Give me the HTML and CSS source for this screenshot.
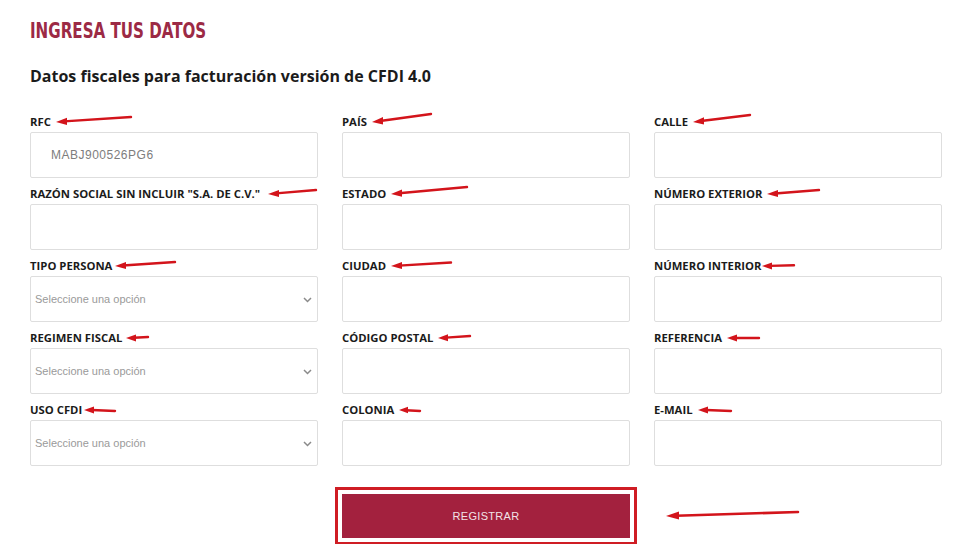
FILE: index.html
```html
<!DOCTYPE html>
<html lang="es">
<head>
<meta charset="utf-8">
<title>Ingresa tus datos</title>
<link rel="stylesheet" href="styles.css">
</head>
<body>
<div class="page">
  <h1 class="title"><span class="title-text">INGRESA TUS DATOS</span></h1>
  <h2 class="subtitle">Datos fiscales para facturación versión de CFDI 4.0</h2>

  <div class="cols">
    <div class="col">
      <div class="field">
        <div class="label">RFC<svg class="arw" width="76" height="16" viewBox="0 -8 76 16"><path d="M8 -0.6 L75 -5" class="ln"/><polygon points="0,0 11,-4.2 11,3" class="hd"/></svg></div>
        <div class="input"><span class="val">MABJ900526PG6</span></div>
      </div>
      <div class="field">
        <div class="label">RAZÓN SOCIAL SIN INCLUIR "S.A. DE C.V."<svg class="arw m8" width="49" height="16" viewBox="0 -8 49 16"><path d="M8 -0.6 L48 -4" class="ln"/><polygon points="0,0 11,-4 11,3" class="hd"/></svg></div>
        <div class="input"></div>
      </div>
      <div class="field">
        <div class="label">TIPO PERSONA<svg class="arw m3" width="61" height="16" viewBox="0 -8 61 16"><path d="M8 -0.5 L60 -4" class="ln"/><polygon points="0,0 11,-4 11,3" class="hd"/></svg></div>
        <div class="select"><span>Seleccione una opción</span><svg class="chev" width="9" height="6" viewBox="0 0 9 6"><path d="M1 1 L4.5 4.5 L8 1" fill="none" stroke="#8a8a8a" stroke-width="1.5"/></svg></div>
      </div>
      <div class="field">
        <div class="label">REGIMEN FISCAL<svg class="arw m4" width="23" height="16" viewBox="0 -8 23 16"><path d="M8 -0.3 L22 -1" class="ln"/><polygon points="0,0 10,-3.5 10,3.5" class="hd"/></svg></div>
        <div class="select"><span>Seleccione una opción</span><svg class="chev" width="9" height="6" viewBox="0 0 9 6"><path d="M1 1 L4.5 4.5 L8 1" fill="none" stroke="#8a8a8a" stroke-width="1.5"/></svg></div>
      </div>
      <div class="field">
        <div class="label">USO CFDI<svg class="arw m2" width="32" height="16" viewBox="0 -8 32 16"><path d="M8 0 L31 1" class="ln"/><polygon points="0,0 10,-3.5 10,3.5" class="hd"/></svg></div>
        <div class="select"><span>Seleccione una opción</span><svg class="chev" width="9" height="6" viewBox="0 0 9 6"><path d="M1 1 L4.5 4.5 L8 1" fill="none" stroke="#8a8a8a" stroke-width="1.5"/></svg></div>
      </div>
    </div>

    <div class="col">
      <div class="field">
        <div class="label">PAÍS<svg class="arw" width="60" height="16" viewBox="0 -8 60 16"><path d="M8 -1 L59 -8" class="ln"/><polygon points="0,0 11,-5 11,2.5" class="hd"/></svg></div>
        <div class="input"></div>
      </div>
      <div class="field">
        <div class="label">ESTADO<svg class="arw" width="77" height="16" viewBox="0 -8 77 16"><path d="M8 -0.8 L76 -7" class="ln"/><polygon points="0,0 11,-4.5 11,2.8" class="hd"/></svg></div>
        <div class="input"></div>
      </div>
      <div class="field">
        <div class="label">CIUDAD<svg class="arw" width="61" height="16" viewBox="0 -8 61 16"><path d="M8 -0.4 L60 -3.5" class="ln"/><polygon points="0,0 11,-4 11,3" class="hd"/></svg></div>
        <div class="input"></div>
      </div>
      <div class="field">
        <div class="label">CÓDIGO POSTAL<svg class="arw" width="33" height="16" viewBox="0 -8 33 16"><path d="M8 -0.4 L32 -2" class="ln"/><polygon points="0,0 10,-3.8 10,3.2" class="hd"/></svg></div>
        <div class="input"></div>
      </div>
      <div class="field">
        <div class="label">COLONIA<svg class="arw" width="22" height="16" viewBox="0 -8 22 16"><path d="M7 0.2 L21 1" class="ln"/><polygon points="0,0 9,-3.2 9,3.2" class="hd"/></svg></div>
        <div class="input"></div>
      </div>
    </div>

    <div class="col">
      <div class="field">
        <div class="label">CALLE<svg class="arw" width="58" height="16" viewBox="0 -8 58 16"><path d="M8 -1 L57 -7" class="ln"/><polygon points="0,0 11,-4.8 11,2.6" class="hd"/></svg></div>
        <div class="input"></div>
      </div>
      <div class="field">
        <div class="label">NÚMERO EXTERIOR<svg class="arw" width="53" height="16" viewBox="0 -8 53 16"><path d="M8 -0.5 L52 -4" class="ln"/><polygon points="0,0 11,-4 11,3" class="hd"/></svg></div>
        <div class="input"></div>
      </div>
      <div class="field">
        <div class="label">NÚMERO INTERIOR<svg class="arw m0" width="33" height="16" viewBox="0 -8 33 16"><path d="M8 -0.1 L32 -0.8" class="ln"/><polygon points="0,0 10,-3.5 10,3.5" class="hd"/></svg></div>
        <div class="input"></div>
      </div>
      <div class="field">
        <div class="label">REFERENCIA<svg class="arw" width="33" height="16" viewBox="0 -8 33 16"><path d="M8 0 L32 0" class="ln"/><polygon points="0,0 10,-3.5 10,3.5" class="hd"/></svg></div>
        <div class="input"></div>
      </div>
      <div class="field">
        <div class="label">E-MAIL<svg class="arw" width="34" height="16" viewBox="0 -8 34 16"><path d="M8 0 L33 1" class="ln"/><polygon points="0,0 10,-3.5 10,3.5" class="hd"/></svg></div>
        <div class="input"></div>
      </div>
    </div>
  </div>

  <div class="actions">
    <div class="spacer"></div>
    <div class="btn-wrap">
      <button class="btn" type="button">REGISTRAR</button>
      <svg class="btn-arw" width="133" height="16" viewBox="0 -8 133 16"><path d="M10 -0.3 L132 -4" class="ln thick"/><polygon points="0,0 13,-4.5 13,3.5" class="hd"/></svg>
    </div>
  </div>
</div>
</body>
</html>
```

FILE: styles.css
```css
* { box-sizing: border-box; }

html, body {
  margin: 0;
  padding: 0;
  background: #ffffff;
}

body {
  font-family: "Open Sans", "Noto Sans", sans-serif;
  color: #1b1b1b;
  width: 971px;
  height: 544px;
  overflow: hidden;
}

.page {
  padding: 19px 0 0 30px;
}

.title {
  margin: 0;
  font-family: "DejaVu Sans Condensed", "Liberation Sans", sans-serif;
  font-weight: 700;
  font-size: 21px;
  line-height: 24px;
  letter-spacing: 0;
  color: #9c2a45;
}

.title-text {
  display: inline-block;
  transform: scaleX(0.8);
  transform-origin: left center;
}

.subtitle {
  margin: 22px 0 0 0;
  font-family: "Open Sans", sans-serif;
  font-weight: 700;
  font-size: 16px;
  line-height: 22px;
  color: #1b1b1b;
}

.cols {
  display: flex;
  gap: 24px;
  margin-top: 27px;
}

.col {
  width: 288px;
  display: flex;
  flex-direction: column;
  gap: 8px;
}

.field {
  display: flex;
  flex-direction: column;
}

.label {
  font-family: "Open Sans", sans-serif;
  font-weight: 700;
  font-size: 11.3px;
  line-height: 16px;
  height: 16px;
  margin-bottom: 2px;
  color: #1b1b1b;
  white-space: nowrap;
}

.arw {
  vertical-align: middle;
  margin-left: 5px;
  overflow: visible;
  position: relative;
  top: -1px;
}
.arw.m8 { margin-left: 8px; }
.arw.m4 { margin-left: 4px; }
.arw.m3 { margin-left: 3px; }
.arw.m2 { margin-left: 2px; }
.arw.m0 { margin-left: 0; }

.ln {
  stroke: #d3141b;
  stroke-width: 2.4;
  stroke-linecap: round;
  fill: none;
}
.ln.thick { stroke-width: 2.6; }
.hd { fill: #d3141b; }

.input,
.select {
  height: 46px;
  border: 1px solid #dedede;
  border-radius: 2px;
  background: #fff;
  display: flex;
  align-items: center;
}

.val {
  padding-left: 20px;
  font-family: "Liberation Sans", Arial, sans-serif;
  font-size: 12px;
  letter-spacing: 0.5px;
  color: #7d7d7d;
}

.select {
  justify-content: space-between;
  padding: 0 5px 0 4px;
  font-family: "Liberation Sans", Arial, sans-serif;
  font-size: 11px;
  color: #9a9a9a;
}

.chev { margin-top: 1px; }

.actions {
  display: flex;
  gap: 24px;
  margin-top: 28px;
}

.spacer { width: 288px; }

.btn-wrap {
  position: relative;
  width: 288px;
}

.btn {
  display: block;
  width: 288px;
  height: 44px;
  border: none;
  border-radius: 0;
  background: #a3213e;
  color: #f2e3e7;
  font-family: "Liberation Sans", Arial, sans-serif;
  font-size: 11px;
  letter-spacing: 0.3px;
  outline: 3px solid #cf1d24;
  outline-offset: 4px;
  cursor: pointer;
}

.btn-arw {
  position: absolute;
  left: 324px;
  top: 14px;
  overflow: visible;
}
```
